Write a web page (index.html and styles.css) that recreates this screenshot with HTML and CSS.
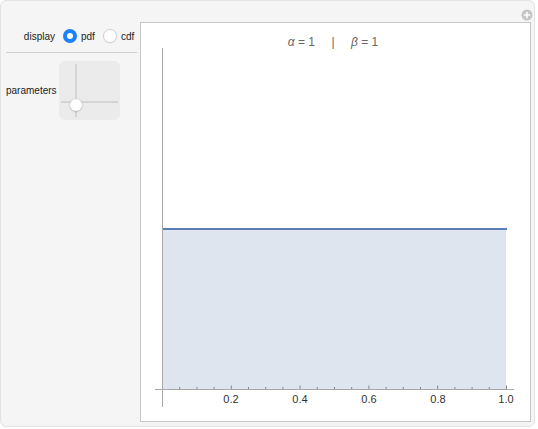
FILE: index.html
```html
<!DOCTYPE html>
<html>
<head>
<meta charset="utf-8">
<link rel="stylesheet" href="styles.css">
</head>
<body>
<div class="app">
  <svg class="plus-btn" width="12" height="12" viewBox="0 0 12 12">
    <circle cx="6" cy="6" r="5.5" fill="#c6c6c6"/>
    <path d="M6 3v6M3 6h6" stroke="#fff" stroke-width="1.6"/>
  </svg>
  <div class="controls">
    <div class="row row-display">
      <span class="label">display</span>
      <label class="radio"><span class="dot on"></span><span>pdf</span></label>
      <label class="radio"><span class="dot"></span><span>cdf</span></label>
    </div>
    <div class="sep"></div>
    <div class="row row-params">
      <span class="label">parameters</span>
      <div class="pad">
        <span class="vline"></span>
        <span class="hline"></span>
        <span class="thumb"></span>
      </div>
    </div>
  </div>
  <div class="plot">
    <svg class="chart" width="389" height="398" viewBox="142 23 389 398">
      <g class="title" font-family="Liberation Sans, Arial, sans-serif" font-size="12" fill="#666">
        <text x="316" y="46" text-anchor="end"><tspan font-style="italic">α</tspan> = 1</text>
        <text x="334" y="46" text-anchor="middle">|</text>
        <text x="352" y="46"><tspan font-style="italic">β</tspan> = 1</text>
      </g>
      <rect x="163.5" y="229" width="343.5" height="160" fill="#dee5ef"/>
      <line x1="163" y1="229" x2="508" y2="229" stroke="#5b7db5" stroke-width="2"/>
      <line x1="163.5" y1="48" x2="163.5" y2="407" stroke="#a8a8a8" stroke-width="1"/>
      <line x1="156" y1="389.5" x2="515" y2="389.5" stroke="#a8a8a8" stroke-width="1"/>
      <g stroke="#888" stroke-width="1">
        <line x1="180.7" y1="389" x2="180.7" y2="387"/>
        <line x1="197.9" y1="389" x2="197.9" y2="387"/>
        <line x1="215.1" y1="389" x2="215.1" y2="387"/>
        <line x1="232.3" y1="389" x2="232.3" y2="385.5"/>
        <line x1="249.5" y1="389" x2="249.5" y2="387"/>
        <line x1="266.7" y1="389" x2="266.7" y2="387"/>
        <line x1="283.9" y1="389" x2="283.9" y2="387"/>
        <line x1="301.1" y1="389" x2="301.1" y2="385.5"/>
        <line x1="318.3" y1="389" x2="318.3" y2="387"/>
        <line x1="335.5" y1="389" x2="335.5" y2="387"/>
        <line x1="352.7" y1="389" x2="352.7" y2="387"/>
        <line x1="369.9" y1="389" x2="369.9" y2="385.5"/>
        <line x1="387.1" y1="389" x2="387.1" y2="387"/>
        <line x1="404.3" y1="389" x2="404.3" y2="387"/>
        <line x1="421.5" y1="389" x2="421.5" y2="387"/>
        <line x1="438.7" y1="389" x2="438.7" y2="385.5"/>
        <line x1="455.9" y1="389" x2="455.9" y2="387"/>
        <line x1="473.1" y1="389" x2="473.1" y2="387"/>
        <line x1="490.3" y1="389" x2="490.3" y2="387"/>
        <line x1="507.5" y1="389" x2="507.5" y2="385.5"/>
      </g>
      <g font-family="Liberation Sans, Arial, sans-serif" font-size="11" fill="#333" text-anchor="middle">
        <text x="232" y="403">0.2</text>
        <text x="301" y="403">0.4</text>
        <text x="370" y="403">0.6</text>
        <text x="439" y="403">0.8</text>
        <text x="507" y="403">1.0</text>
      </g>
    </svg>
  </div>
</div>
</body>
</html>
```
FILE: styles.css
```css
html, body {
  margin: 0;
  padding: 0;
  background: #ffffff;
}
body {
  font-family: "Liberation Sans", Arial, sans-serif;
}
.app {
  position: relative;
  box-sizing: border-box;
  width: 535px;
  height: 427px;
  background: #f5f5f5;
  border: 1px solid #e3e3e3;
  border-radius: 6px;
  display: flex;
  padding: 21px 3px 5px 5px;
}
.plus-btn {
  position: absolute;
  top: 8px;
  left: 520px;
}
.controls {
  width: 132px;
  flex: none;
  font-size: 10px;
  color: #222;
}
.row {
  display: flex;
  align-items: center;
}
.label {
  width: 49px;
  text-align: right;
  flex: none;
  white-space: nowrap;
}
.row-display {
  height: 28px;
}
.radio {
  display: flex;
  align-items: center;
  margin-left: 8px;
}
.radio + .radio {
  margin-left: 8px;
}
.dot {
  box-sizing: border-box;
  width: 14px;
  height: 14px;
  border-radius: 50%;
  background: #fff;
  border: 1px solid #d2d2d2;
  margin-right: 4px;
  box-shadow: 0 0.5px 1px rgba(0,0,0,0.08);
}
.dot.on {
  background: #fff;
  border: 4.5px solid #1a82fb;
}
.sep {
  height: 1px;
  background: #cfcfcf;
  margin-top: 2px;
  width: 131px;
}
.row-params {
  margin-top: 8px;
}
.pad {
  position: relative;
  width: 61px;
  height: 59px;
  margin-left: 4px;
  background: #ebebeb;
  border-radius: 6px;
}
.vline {
  position: absolute;
  left: 16px;
  top: 3px;
  bottom: 3px;
  width: 2px;
  background: #d4d4d4;
}
.hline {
  position: absolute;
  top: 40px;
  left: 2px;
  right: 2px;
  height: 2px;
  background: #d4d4d4;
}
.thumb {
  position: absolute;
  left: 11px;
  top: 38px;
  width: 12px;
  height: 12px;
  border-radius: 50%;
  background: #fff;
  box-shadow: 0 0.5px 2px rgba(0,0,0,0.3);
}
.plot {
  margin-left: auto;
  box-sizing: border-box;
  width: 391px;
  height: 400px;
  background: #fff;
  border: 1px solid #c8c8c8;
}
.chart {
  display: block;
}
```
